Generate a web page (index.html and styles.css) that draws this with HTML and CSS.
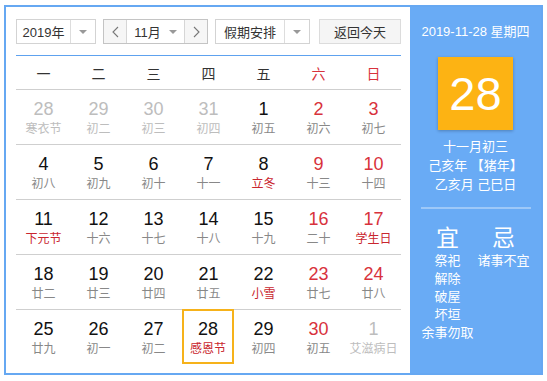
FILE: index.html
```html
<!DOCTYPE html>
<html lang="zh-CN">
<head>
    <meta charset="UTF-8">
    <meta name="viewport" content="width=device-width, initial-scale=1.0">
    <title>万年历</title>
    <link rel="stylesheet" href="styles.css">
</head>
<body>
    <div class="cal">
        <div class="cal__main">
            <div class="cal__bar">
                <div class="sel sel--year">
                    <span class="sel__text">2019年</span>
                    <span class="sel__arrow"><i class="tri"></i></span>
                </div>
                <div class="month">
                    <span class="month__btn">
                        <svg width="7" height="12" viewBox="0 0 7 12"><polyline points="6,1 1,6 6,11" fill="none" stroke="#777" stroke-width="1.1"/></svg>
                    </span>
                    <span class="month__mid">11月 <i class="tri"></i></span>
                    <span class="month__btn">
                        <svg width="7" height="12" viewBox="0 0 7 12"><polyline points="1,1 6,6 1,11" fill="none" stroke="#777" stroke-width="1.1"/></svg>
                    </span>
                </div>
                <div class="sel sel--holiday">
                    <span class="sel__text">假期安排</span>
                    <span class="sel__arrow"><i class="tri"></i></span>
                </div>
                <button class="today-btn">返回今天</button>
            </div>

            <div class="cal__week">
                <span>一</span>
                <span>二</span>
                <span>三</span>
                <span>四</span>
                <span>五</span>
                <span class="red">六</span>
                <span class="red">日</span>
            </div>

            <div class="cal__days">
                <div class="day day--other"><b>28</b><small>寒衣节</small></div>
                <div class="day day--other"><b>29</b><small>初二</small></div>
                <div class="day day--other"><b>30</b><small>初三</small></div>
                <div class="day day--other"><b>31</b><small>初四</small></div>
                <div class="day"><b>1</b><small>初五</small></div>
                <div class="day day--rest"><b>2</b><small>初六</small></div>
                <div class="day day--rest"><b>3</b><small>初七</small></div>

                <div class="day"><b>4</b><small>初八</small></div>
                <div class="day"><b>5</b><small>初九</small></div>
                <div class="day"><b>6</b><small>初十</small></div>
                <div class="day"><b>7</b><small>十一</small></div>
                <div class="day"><b>8</b><small class="fest">立冬</small></div>
                <div class="day day--rest"><b>9</b><small>十三</small></div>
                <div class="day day--rest"><b>10</b><small>十四</small></div>

                <div class="day"><b>11</b><small class="fest">下元节</small></div>
                <div class="day"><b>12</b><small>十六</small></div>
                <div class="day"><b>13</b><small>十七</small></div>
                <div class="day"><b>14</b><small>十八</small></div>
                <div class="day"><b>15</b><small>十九</small></div>
                <div class="day day--rest"><b>16</b><small>二十</small></div>
                <div class="day day--rest"><b>17</b><small class="fest">学生日</small></div>

                <div class="day"><b>18</b><small>廿二</small></div>
                <div class="day"><b>19</b><small>廿三</small></div>
                <div class="day"><b>20</b><small>廿四</small></div>
                <div class="day"><b>21</b><small>廿五</small></div>
                <div class="day"><b>22</b><small class="fest">小雪</small></div>
                <div class="day day--rest"><b>23</b><small>廿七</small></div>
                <div class="day day--rest"><b>24</b><small>廿八</small></div>

                <div class="day day--last"><b>25</b><small>廿九</small></div>
                <div class="day day--last"><b>26</b><small>初一</small></div>
                <div class="day day--last"><b>27</b><small>初二</small></div>
                <div class="day day--last day--today"><b>28</b><small class="fest">感恩节</small></div>
                <div class="day day--last"><b>29</b><small>初四</small></div>
                <div class="day day--last day--rest"><b>30</b><small>初五</small></div>
                <div class="day day--last day--other"><b>1</b><small>艾滋病日</small></div>
            </div>
        </div>

        <div class="cal__side">
            <p class="side__date">2019-11-28 星期四</p>
            <div class="side__big">28</div>
            <div class="side__lunar">
                <p>十一月初三</p>
                <p>己亥年 【猪年】</p>
                <p>乙亥月 己巳日</p>
            </div>
            <div class="side__line"></div>
            <div class="side__yiji">
                <div class="yiji__col">
                    <h3>宜</h3>
                    <p>祭祀</p>
                    <p>解除</p>
                    <p>破屋</p>
                    <p>坏垣</p>
                    <p>余事勿取</p>
                </div>
                <div class="yiji__col">
                    <h3>忌</h3>
                    <p>诸事不宜</p>
                </div>
            </div>
        </div>
    </div>
</body>
</html>
```

FILE: styles.css
```css
html, body {
    margin: 0;
    background-color: #fff;
}

body {
    padding: 5px 0 0 4px;
    font-family: "Liberation Sans", "Noto Sans CJK SC", sans-serif;
}

p, h3 {
    margin: 0;
}

.cal {
    display: flex;
    width: 535px;
    height: 366px;
    border: 2px solid #66a8f2;
    background-color: #69abf5;
}

.cal__main {
    box-sizing: border-box;
    width: 404px;
    padding: 12px 0 0 10px;
    background-color: #fff;
}

/* top controls */
.cal__bar {
    display: flex;
    gap: 7px;
    height: 25px;
    font-size: 13px;
    color: #333;
}

.sel {
    box-sizing: border-box;
    display: flex;
    height: 25px;
    border: 1px solid #d3d3d3;
    background-color: #fff;
}

.sel--year {
    width: 80px;
}

.sel--holiday {
    width: 95px;
}

.sel__text {
    flex: 1;
    display: flex;
    align-items: center;
    justify-content: center;
    border-right: 1px solid #ddd;
}

.sel__arrow {
    width: 24px;
    display: flex;
    align-items: center;
    justify-content: center;
}

.tri {
    display: inline-block;
    width: 0;
    height: 0;
    border-left: 4px solid transparent;
    border-right: 4px solid transparent;
    border-top: 4px solid #999;
}

.month {
    box-sizing: border-box;
    display: flex;
    width: 105px;
    height: 25px;
    border: 1px solid #c4c4c4;
}

.month__btn {
    width: 22px;
    display: flex;
    align-items: center;
    justify-content: center;
    background-color: #f6f6f6;
}

.month__btn:first-child {
    border-right: 1px solid #d6d6d6;
}

.month__btn:last-child {
    border-left: 1px solid #d6d6d6;
}

.month__mid {
    flex: 1;
    display: flex;
    align-items: center;
    justify-content: center;
    gap: 8px;
    background-color: #fff;
}

.today-btn {
    box-sizing: border-box;
    width: 82px;
    height: 25px;
    margin-left: 2px;
    padding: 0;
    font-family: inherit;
    font-size: 13px;
    color: #333;
    background-color: #f5f5f5;
    border: 1px solid #dcdcdc;
}

/* weekday header */
.cal__week {
    display: grid;
    grid-template-columns: repeat(7, 55px);
    height: 33px;
    margin-top: 11px;
    border-top: 1px solid #5ea2ef;
    border-bottom: 1px solid #cfcfcf;
    width: 385px;
    font-size: 14px;
    color: #333;
}

.cal__week > span {
    display: flex;
    align-items: center;
    justify-content: center;
}

.red {
    color: #d8323c;
}

/* day cells */
.cal__days {
    display: grid;
    grid-template-columns: repeat(7, 55px);
    width: 385px;
}

.day {
    box-sizing: border-box;
    height: 55px;
    padding-top: 9px;
    border-bottom: 1px solid #cfcfcf;
    text-align: center;
}

.day > b {
    display: block;
    font-weight: normal;
    font-size: 18px;
    line-height: 20px;
    color: #111;
}

.day > small {
    display: block;
    font-size: 12px;
    line-height: 20px;
    color: #888;
}

.day--rest > b {
    color: #d8323c;
}

.day > .fest {
    color: #c9262e;
}

.day--other > b,
.day--other > small {
    color: #bdbdbd;
}

.day--last {
    border-bottom: none;
}

.day--today {
    margin: -1px 2px 0 1px;
    padding-top: 8px;
    border: 2px solid #f6b21a;
}

/* right panel */
.cal__side {
    flex: 1;
    padding-top: 17px;
    color: #fff;
    text-align: center;
}

.side__date {
    font-size: 13px;
    line-height: 16px;
}

.side__big {
    width: 75px;
    height: 73px;
    margin: 17px auto 0;
    background-color: #fdb313;
    box-shadow: 0 1px 3px rgba(0, 0, 0, 0.25);
    font-size: 47px;
    line-height: 73px;
}

.side__lunar {
    margin-top: 7px;
    font-size: 13px;
    line-height: 19px;
}

.side__line {
    width: 110px;
    height: 2px;
    margin: 13px auto 0;
    background-color: rgba(255, 255, 255, 0.35);
}

.side__yiji {
    display: grid;
    grid-template-columns: 56px 56px;
    justify-content: center;
    margin-top: 15px;
}

.yiji__col > h3 {
    font-weight: normal;
    font-size: 23px;
    line-height: 28px;
}

.yiji__col > p {
    font-size: 13px;
    line-height: 18px;
    white-space: nowrap;
}
```
